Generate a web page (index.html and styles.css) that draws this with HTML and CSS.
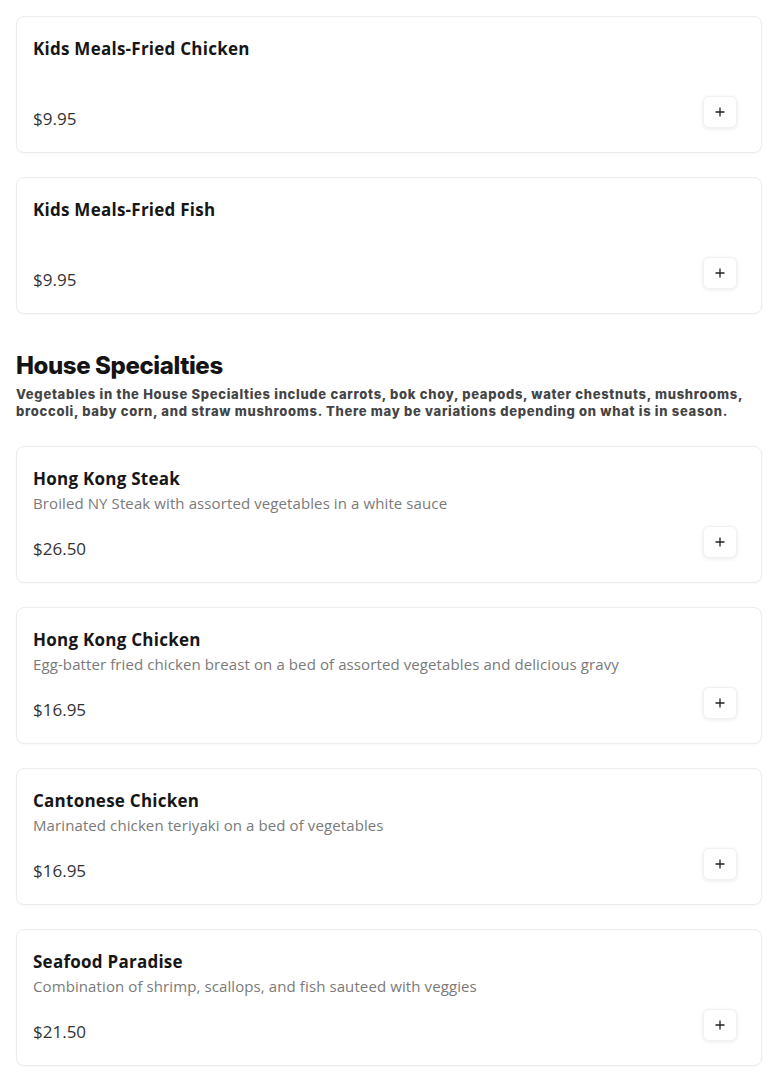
FILE: index.html
```html
<!DOCTYPE html>
<html lang="en">
<head>
<meta charset="utf-8">
<title>Menu</title>
<link rel="stylesheet" href="styles.css">
</head>
<body>
<main class="menu">
  <section class="items">
    <article class="card">
      <h3 class="card-title">Kids Meals-Fried Chicken</h3>
      <p class="card-desc"></p>
      <div class="card-foot">
        <span class="price">$9.95</span>
        <button class="add" aria-label="Add"><svg viewBox="0 0 10 10" width="10" height="10"><path d="M5 0.5V9.5M0.5 5H9.5" stroke="#222" stroke-width="1.3" fill="none"/></svg></button>
      </div>
    </article>
    <article class="card">
      <h3 class="card-title">Kids Meals-Fried Fish</h3>
      <p class="card-desc"></p>
      <div class="card-foot">
        <span class="price">$9.95</span>
        <button class="add" aria-label="Add"><svg viewBox="0 0 10 10" width="10" height="10"><path d="M5 0.5V9.5M0.5 5H9.5" stroke="#222" stroke-width="1.3" fill="none"/></svg></button>
      </div>
    </article>
  </section>

  <header class="section-head">
    <h2 class="section-title">House Specialties</h2>
    <p class="section-note">Vegetables in the House Specialties include carrots, bok choy, peapods, water chestnuts, mushrooms, broccoli, baby corn, and straw mushrooms. There may be variations depending on what is in season.</p>
  </header>

  <section class="items">
    <article class="card">
      <h3 class="card-title">Hong Kong Steak</h3>
      <p class="card-desc">Broiled NY Steak with assorted vegetables in a white sauce</p>
      <div class="card-foot">
        <span class="price">$26.50</span>
        <button class="add" aria-label="Add"><svg viewBox="0 0 10 10" width="10" height="10"><path d="M5 0.5V9.5M0.5 5H9.5" stroke="#222" stroke-width="1.3" fill="none"/></svg></button>
      </div>
    </article>
    <article class="card">
      <h3 class="card-title">Hong Kong Chicken</h3>
      <p class="card-desc">Egg-batter fried chicken breast on a bed of assorted vegetables and delicious gravy</p>
      <div class="card-foot">
        <span class="price">$16.95</span>
        <button class="add" aria-label="Add"><svg viewBox="0 0 10 10" width="10" height="10"><path d="M5 0.5V9.5M0.5 5H9.5" stroke="#222" stroke-width="1.3" fill="none"/></svg></button>
      </div>
    </article>
    <article class="card">
      <h3 class="card-title">Cantonese Chicken</h3>
      <p class="card-desc">Marinated chicken teriyaki on a bed of vegetables</p>
      <div class="card-foot">
        <span class="price">$16.95</span>
        <button class="add" aria-label="Add"><svg viewBox="0 0 10 10" width="10" height="10"><path d="M5 0.5V9.5M0.5 5H9.5" stroke="#222" stroke-width="1.3" fill="none"/></svg></button>
      </div>
    </article>
    <article class="card">
      <h3 class="card-title">Seafood Paradise</h3>
      <p class="card-desc">Combination of shrimp, scallops, and fish sauteed with veggies</p>
      <div class="card-foot">
        <span class="price">$21.50</span>
        <button class="add" aria-label="Add"><svg viewBox="0 0 10 10" width="10" height="10"><path d="M5 0.5V9.5M0.5 5H9.5" stroke="#222" stroke-width="1.3" fill="none"/></svg></button>
      </div>
    </article>
  </section>
</main>
</body>
</html>
```

FILE: styles.css
```css
* { box-sizing: border-box; }
html, body { margin: 0; padding: 0; background: #fff; }
body { font-family: "Open Sans", "Liberation Sans", sans-serif; color: #1a1a1a; }

.menu { padding: 16px 16px 22px; }

.items { display: flex; flex-direction: column; gap: 24px; }

.card {
  border: 1px solid #ececec;
  border-radius: 8px;
  padding: 20px 16px 21px;
  background: #fff;
  box-shadow: 0 1px 2px rgba(0,0,0,0.03);
}
.card-title {
  margin: 0;
  font-size: 17px;
  line-height: 24px;
  font-weight: 700;
  color: #161616;
  letter-spacing: 0.25px;
}
.card-desc {
  margin: 0;
  min-height: 24px;
  font-size: 15px;
  line-height: 24px;
  font-weight: 400;
  color: #7a7a7a;
  letter-spacing: 0.1px;
}
.card-foot {
  margin-top: 22px;
  height: 24px;
  display: flex;
  justify-content: space-between;
  align-items: flex-end;
}
.price {
  font-size: 17px;
  line-height: 24px;
  color: #333;
}
.add {
  width: 34px;
  height: 32px;
  margin: -11px 8px 3px 0;
  padding: 0;
  border: 1px solid #f1f1f1;
  border-radius: 6px;
  background: #fff;
  box-shadow: 0 1px 4px rgba(0,0,0,0.08);
  display: flex;
  align-items: center;
  justify-content: center;
  cursor: pointer;
}

.section-head { padding: 36px 0 26px; }
.section-title {
  margin: 0;
  font-family: Inter, "Open Sans", sans-serif;
  font-size: 24px;
  line-height: 32px;
  font-weight: 800;
  color: #141414;
  letter-spacing: -0.4px;
}
.section-note {
  margin: 4px 0 0;
  font-family: Inter, "Open Sans", sans-serif;
  font-size: 13px;
  line-height: 17px;
  font-weight: 800;
  color: #444;
  letter-spacing: 0.7px;
}
```
